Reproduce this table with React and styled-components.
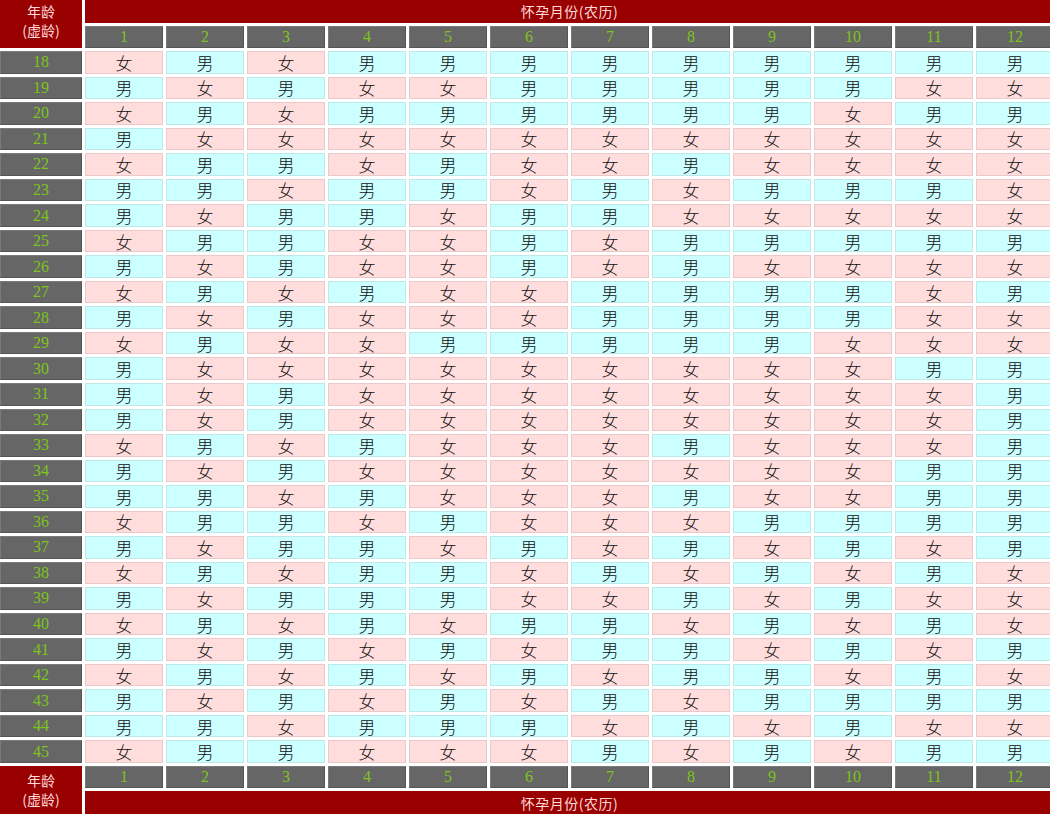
import React from "react";
import styled, { createGlobalStyle } from "styled-components";

const GlobalStyle = createGlobalStyle`
  html, body {
    margin: 0;
    padding: 0;
    background: #ffffff;
    overflow: hidden;
  }
  body {
    font-family: "Noto Sans CJK SC", "Liberation Serif", serif;
  }
`;

const Table = styled.div`
  display: grid;
  grid-template-columns: 82px repeat(12, 78px);
  grid-template-rows: repeat(32, 1fr);
  gap: 3px;
  width: 1054px;
  height: 814px;
  background: #ffffff;
`;

const Cell = styled.div`
  display: flex;
  align-items: center;
  justify-content: center;
  box-sizing: border-box;
  min-width: 0;
  min-height: 0;
  overflow: hidden;
`;

const AgeHeader = styled(Cell)`
  grid-row: span 2;
  flex-direction: column;
  background: #990000;
  color: #ffd9d9;
  font-family: "Noto Sans CJK SC", sans-serif;
  font-size: 14px;
  line-height: 19px;
  padding-bottom: ${(p) => (p.$top ? "6px" : "0")};
`;

const MonthTitle = styled(Cell)`
  grid-column: span 12;
  background: #990000;
  color: #ffd9d9;
  font-family: "Noto Sans CJK SC", sans-serif;
  font-size: 14px;
  letter-spacing: 0.5px;
`;

const NumCell = styled(Cell)`
  background: #666666;
  color: #7ec41c;
  font-family: "Liberation Serif", "DejaVu Serif", serif;
  font-size: 16px;
  border-top: 1px solid #7a7a7a;
  border-left: 1px solid #7a7a7a;
  border-bottom: 1px solid #555555;
  border-right: 1px solid #555555;
`;

const Result = styled(Cell)`
  background: ${(p) => (p.$boy ? "#ccffff" : "#ffdddd")};
  color: #111111;
  font-family: "Noto Sans CJK SC", sans-serif;
  font-size: 17px;
  font-weight: 300;
  border: 1px solid ${(p) => (p.$boy ? "#bfe8e8" : "#ecc9c9")};
`;

const DATA = {
  18: "女男女男男男男男男男男男",
  19: "男女男女女男男男男男女女",
  20: "女男女男男男男男男女男男",
  21: "男女女女女女女女女女女女",
  22: "女男男女男女女男女女女女",
  23: "男男女男男女男女男男男女",
  24: "男女男男女男男女女女女女",
  25: "女男男女女男女男男男男男",
  26: "男女男女女男女男女女女女",
  27: "女男女男女女男男男男女男",
  28: "男女男女女女男男男男女女",
  29: "女男女女男男男男男女女女",
  30: "男女女女女女女女女女男男",
  31: "男女男女女女女女女女女男",
  32: "男女男女女女女女女女女男",
  33: "女男女男女女女男女女女男",
  34: "男女男女女女女女女女男男",
  35: "男男女男女女女男女女男男",
  36: "女男男女男女女女男男男男",
  37: "男女男男女男女男女男女男",
  38: "女男女男男女男女男女男女",
  39: "男女男男男女女男女男女女",
  40: "女男女男女男男女男女男女",
  41: "男女男女男女男男女男女男",
  42: "女男女男女男女男男女男女",
  43: "男女男女男女男女男男男男",
  44: "男男女男男男女男女男女女",
  45: "女男男女女女男女男女男男",
};

const MONTHS = Array.from({ length: 12 }, (_, i) => i + 1);
const AGES = Object.keys(DATA).map(Number).sort((a, b) => a - b);

function AgeLabel({ top }) {
  return (
    <AgeHeader $top={top}>
      <span>年龄</span>
      <span>(虚龄)</span>
    </AgeHeader>
  );
}

function MonthNumbers() {
  return MONTHS.map((m) => <NumCell key={`m${m}`}>{m}</NumCell>);
}

export default function App() {
  return (
    <>
      <GlobalStyle />
      <Table>
        <AgeLabel top />
        <MonthTitle>怀孕月份(农历)</MonthTitle>
        <MonthNumbers />
        {AGES.map((age) => (
          <React.Fragment key={age}>
            <NumCell>{age}</NumCell>
            {Array.from(DATA[age]).map((g, i) => (
              <Result key={i} $boy={g === "男"}>
                {g}
              </Result>
            ))}
          </React.Fragment>
        ))}
        <AgeLabel />
        <MonthNumbers />
        <MonthTitle>怀孕月份(农历)</MonthTitle>
      </Table>
    </>
  );
}
